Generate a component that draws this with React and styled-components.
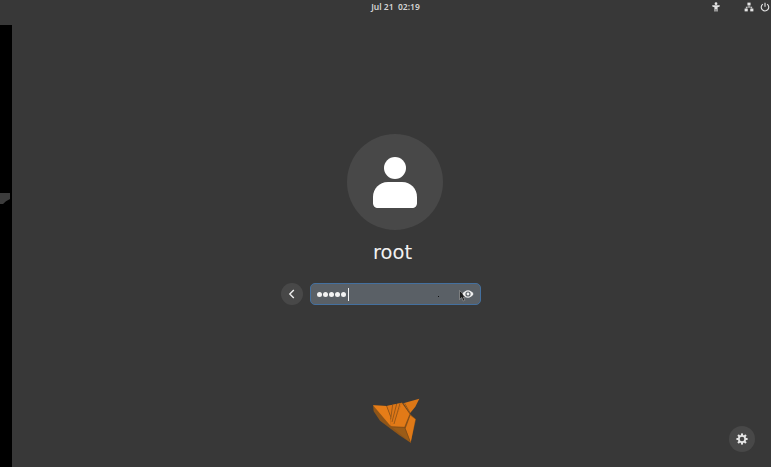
import React from "react";
import styled, { createGlobalStyle } from "styled-components";

const Global = createGlobalStyle`
  html, body { margin: 0; padding: 0; background: #383838; overflow: hidden; }
  * { box-sizing: border-box; }
`;

const Screen = styled.div`
  width: 771px;
  height: 467px;
  display: grid;
  grid-template-columns: 12px 1fr;
  background: #383838;
  color: #fff;
  font-family: "DejaVu Sans", "Noto Sans", sans-serif;
  position: relative;
`;

const Rail = styled.div`
  margin-top: 25px;
  background: #000;
  padding-top: 168px;
`;

const RailChip = styled.div`
  width: 10px;
  height: 11px;
  background: #3c3c3c;
  clip-path: polygon(0 0, 100% 0, 100% 55%, 60% 75%, 30% 100%, 0 100%);
`;

const Main = styled.div`
  display: flex;
  flex-direction: column;
  min-width: 0;
`;

const TopBar = styled.header`
  height: 13px;
  display: grid;
  grid-template-columns: 1fr auto 1fr;
  align-items: center;
  margin-left: -12px;
  padding-left: 20px;
`;

const Clock = styled.div`
  grid-column: 2;
  font-family: "Noto Sans", sans-serif;
  font-size: 8.5px;
  font-weight: 600;
  color: #d4d4d4;
  white-space: pre;
`;

const Tray = styled.div`
  grid-column: 3;
  display: flex;
  justify-content: flex-end;
  align-items: center;
  padding-right: 1px;
`;

const TrayIcon = styled.svg`
  width: 10px;
  height: 10px;
  display: block;
  margin-left: ${(p) => p.$gap || 0}px;
`;

const Center = styled.main`
  height: 262px;
  margin-top: 121px;
  display: flex;
  flex-direction: column;
  align-items: flex-start;
`;

const Avatar = styled.div`
  width: 96px;
  height: 96px;
  margin-left: 335px;
  border-radius: 50%;
  background: #484848;
  display: flex;
  align-items: center;
  justify-content: center;
`;

const UserName = styled.div`
  width: 100%;
  padding-left: 361px;
  margin-top: 10px;
  font-size: 19.5px;
  line-height: 25px;
  color: #f2f2f2;
`;

const LoginRow = styled.div`
  margin: 18px 0 0 269px;
  display: flex;
  align-items: center;
  gap: 7px;
`;

const BackButton = styled.div`
  width: 22px;
  height: 22px;
  border-radius: 50%;
  background: #484848;
  display: flex;
  align-items: center;
  justify-content: center;
`;

const Entry = styled.div`
  width: 171px;
  height: 22px;
  border-radius: 5px;
  border: 1.5px solid #44709f;
  background: #5a6066;
  display: flex;
  align-items: center;
  padding: 0 6px;
  position: relative;
`;

const Dots = styled.span`
  display: flex;
  gap: 1px;
  margin-right: 2px;
`;

const Dot = styled.span`
  width: 5px;
  height: 5px;
  border-radius: 50%;
  background: #f2f2f2;
`;

const Caret = styled.span`
  width: 1px;
  height: 13px;
  background: #f2f2f2;
`;

const Speck = styled.span`
  position: absolute;
  left: 127px;
  top: 12px;
  width: 1px;
  height: 1px;
  background: #111;
`;

const Eye = styled.svg`
  position: absolute;
  right: 6px;
  top: 3.5px;
  width: 12px;
  height: 12px;
`;

const Pointer = styled.svg`
  position: absolute;
  right: 13px;
  top: 5.500px;
  width: 8px;
  height: 12px;
`;

const Footer = styled.footer`
  position: relative;
  flex: 1;
  padding-left: 358px;
`;

const Logo = styled.svg`
  display: block;
  width: 54px;
  height: 50px;
`;

const GearButton = styled.div`
  position: absolute;
  right: 16px;
  bottom: 15px;
  width: 26px;
  height: 26px;
  border-radius: 50%;
  background: #484848;
  display: flex;
  align-items: center;
  justify-content: center;
`;

const gearTeeth = [0, 45, 90, 135];
const dots = [0, 1, 2, 3, 4];

export default function App() {
  return (
    <Screen>
      <Global />
      <Rail>
        <RailChip />
      </Rail>
      <Main>
        <TopBar>
          <Clock>Jul 21  02:19</Clock>
          <Tray>
            <TrayIcon viewBox="0 0 16 16" fill="#e4e4e4">
              <circle cx="8" cy="2.600" r="2.200" />
              <path d="M2 5.200h12v1.800L10.500 8.200v7H8.700v-4H7.300v4H5.500v-7L2 7z" />
            </TrayIcon>
            <TrayIcon $gap={23} viewBox="0 0 16 16" fill="#e4e4e4">
              <rect x="5.500" y="1" width="5" height="4.500" />
              <rect x="1" y="10.500" width="5" height="4.500" />
              <rect x="10" y="10.500" width="5" height="4.500" />
              <path d="M7.400 5.500h1.200v2.200H13v2.800h-1.200V8.900H4.200v1.600H3V7.700h4.400z" />
            </TrayIcon>
            <TrayIcon $gap={6} viewBox="0 0 16 16" fill="none" stroke="#e4e4e4" strokeWidth="1.800">
              <path d="M4.600 3.400a6 6 0 1 0 6.800 0" />
              <path d="M8 1v6.500" />
            </TrayIcon>
          </Tray>
        </TopBar>
        <Center>
          <Avatar>
            <svg width="44" height="52" viewBox="0 0 44 52" fill="#fff">
              <circle cx="22" cy="12" r="11" />
              <path d="M15 26h14c9 0 15 7 15 15v6c0 3-2 5-5 5H5c-3 0-5-2-5-5v-6c0-8 6-15 15-15z" />
            </svg>
          </Avatar>
          <UserName>root</UserName>
          <LoginRow>
            <BackButton>
              <svg width="10" height="10" viewBox="0 0 10 10" fill="none" stroke="#eee" strokeWidth="1.400">
                <path d="M6.800 1 2.800 5l4 4" />
              </svg>
            </BackButton>
            <Entry>
              <Dots>
                {dots.map((d) => (
                  <Dot key={d} />
                ))}
              </Dots>
              <Caret />
              <Speck />
              <Pointer viewBox="0 0 8 12">
                <path d="M.5.500v9l2.200-2 1.600 3.500 1.600-.8-1.600-3.200h3z" fill="#1c1c1c" stroke="#aaa" strokeWidth=".6" />
              </Pointer>
              <Eye viewBox="0 0 12 12">
                <path d="M.5 6C2 3.400 4 2.200 6 2.200S10 3.400 11.500 6C10 8.600 8 9.800 6 9.800S2 8.600.5 6z" fill="#eee" />
                <circle cx="6" cy="6" r="2.600" fill="#5a6066" />
                <circle cx="6" cy="6" r="1.400" fill="#eee" />
              </Eye>
            </Entry>
          </LoginRow>
        </Center>
        <Footer>
          <Logo viewBox="0 0 162 150">
            <polygon points="9,28 50,30 96,20 120,54 138,70 122,140 88,118 30,74 11,46" fill="#8f5518" />
            <polygon points="9,28 50,30 62,62 60,88" fill="#e67d18" />
            <polygon points="50,30 96,20 68,92 60,88 62,62" fill="#df7716" />
            <polygon points="96,20 120,54 104,94 66,92" fill="#e27a17" />
            <polygon points="100,22 148,8 136,32 120,52" fill="#dc7716" />
            <polygon points="120,58 136,70 122,140 106,96" fill="#df7917" />
            <polygon points="66,94 104,96 122,140" fill="#9b5c18" />
            <path d="M50 30 62 62M68 26 62 70M80 24 66 78M90 22 72 84M96 20 120 54M120 54 104 94M120 58 106 96M104 22 120 50M66 92 104 94 122 140" stroke="#7a4a18" strokeWidth="2" fill="none" />
          </Logo>
          <GearButton>
            <svg width="12" height="12" viewBox="0 0 14 14">
              {gearTeeth.map((a) => (
                <rect key={a} x="5.800" y="0.500" width="2.400" height="13" fill="#e6e6e6" transform={`rotate(${a} 7 7)`} />
              ))}
              <circle cx="7" cy="7" r="4.700" fill="#e6e6e6" />
              <circle cx="7" cy="7" r="2.700" fill="#484848" />
            </svg>
          </GearButton>
        </Footer>
      </Main>
    </Screen>
  );
}
